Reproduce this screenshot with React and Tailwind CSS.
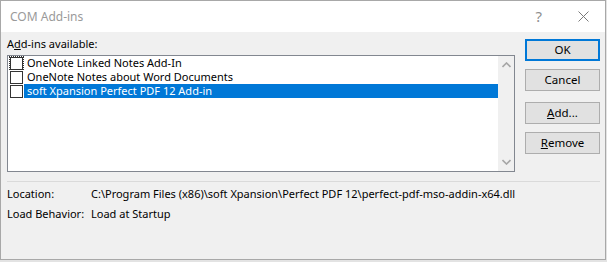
import React from "react";

const items = [
  { id: 1, label: "OneNote Linked Notes Add-In", focused: true },
  { id: 2, label: "OneNote Notes about Word Documents" },
  { id: 3, label: "soft Xpansion Perfect PDF 12 Add-in", selected: true },
];

const Chevron = ({ up }) => (
  <svg width="9" height="6" viewBox="0 0 9 6" className="block">
    <path
      d={up ? "M0.5 5 L4.5 1 L8.5 5" : "M0.5 1 L4.5 5 L8.5 1"}
      fill="none"
      stroke="#a6a6a6"
      strokeWidth="1.6"
    />
  </svg>
);

const Button = ({ children, primary, className = "" }) => (
  <button
    className={
      "w-[75px] h-[22px] bg-[#e1e1e1] text-black text-[11.5px] leading-none flex items-center justify-center " +
      (primary ? "border-2 border-[#0078d7] " : "border border-[#adadad] ") +
      className
    }
  >
    {children}
  </button>
);

const App = () => {
  return (
    <div
      className="w-[607px] h-[262px] bg-[#e3e3e3] overflow-hidden"
      style={{ fontFamily: '"Segoe UI", "Noto Sans", "Liberation Sans", sans-serif' }}
    >
      <div className="w-[606px] h-[260px] border border-[#a8a8a8] bg-[#f0f0f0] flex flex-col">
        {/* title bar */}
        <div className="h-[31px] bg-white flex items-center shrink-0">
          <span className="ml-[9px] text-[12px] text-[#9a9a9a]">COM Add-ins</span>
          <span className="ml-auto text-[15px] text-[#8f8f8f] mr-[36px] leading-none">?</span>
          <svg width="11" height="11" viewBox="0 0 11 11" className="mr-[16px]">
            <path d="M0.5 0.5 L10.5 10.5 M10.5 0.5 L0.5 10.5" stroke="#7a7a7a" strokeWidth="1" />
          </svg>
        </div>

        {/* body */}
        <div className="flex pl-[6px]">
          <div className="flex flex-col">
            <div className="mt-[4px] h-[16px] text-[11px] leading-[16px] text-black">
              A<span className="underline">d</span>d-ins available:
            </div>
            <div className="mt-[3px] w-[508px] h-[117px] border border-[#828790] bg-white flex">
              <div className="flex-1 flex flex-col">
                {items.map((item) => (
                  <div key={item.id} className="h-[14px] flex items-center">
                    <div
                      className={
                        "ml-[1px] w-[15px] h-[14px] flex items-center justify-center " +
                        (item.focused ? "border border-dotted border-[#333]" : "")
                      }
                    >
                      <div className="w-[13px] h-[13px] border border-[#333] bg-white" />
                    </div>
                    <div
                      className={
                        "flex-1 h-[14px] pl-[3px] text-[11px] leading-[14px] whitespace-nowrap " +
                        (item.selected ? "bg-[#0078d7] text-white" : "text-black")
                      }
                    >
                      {item.label}
                    </div>
                  </div>
                ))}
              </div>
              <div className="w-[16px] bg-[#f0f0f0] flex flex-col items-center justify-between py-[6px]">
                <Chevron up />
                <Chevron />
              </div>
            </div>
          </div>

          <div className="ml-[10px] flex flex-col">
            <Button primary className="mt-[7px]">OK</Button>
            <Button className="mt-[8px]">Cancel</Button>
            <Button className="mt-[11px]">
              <span className="underline">A</span>dd...
            </Button>
            <Button className="mt-[8px]">
              <span className="underline">R</span>emove
            </Button>
          </div>
        </div>

        <div className="mt-[9px] ml-[6px] mr-[5px] h-px bg-[#dadada]" />

        <div className="ml-[6px] mt-[2px] text-[11px] text-black whitespace-nowrap">
          <div className="flex h-[20px] items-center">
            <span className="w-[84px] shrink-0">Location:</span>
            <span>C:\Program Files (x86)\soft Xpansion\Perfect PDF 12\perfect-pdf-mso-addin-x64.dll</span>
          </div>
          <div className="flex h-[20px] items-center">
            <span className="w-[84px] shrink-0">Load Behavior:</span>
            <span>Load at Startup</span>
          </div>
        </div>
      </div>
    </div>
  );
};

export default App;
